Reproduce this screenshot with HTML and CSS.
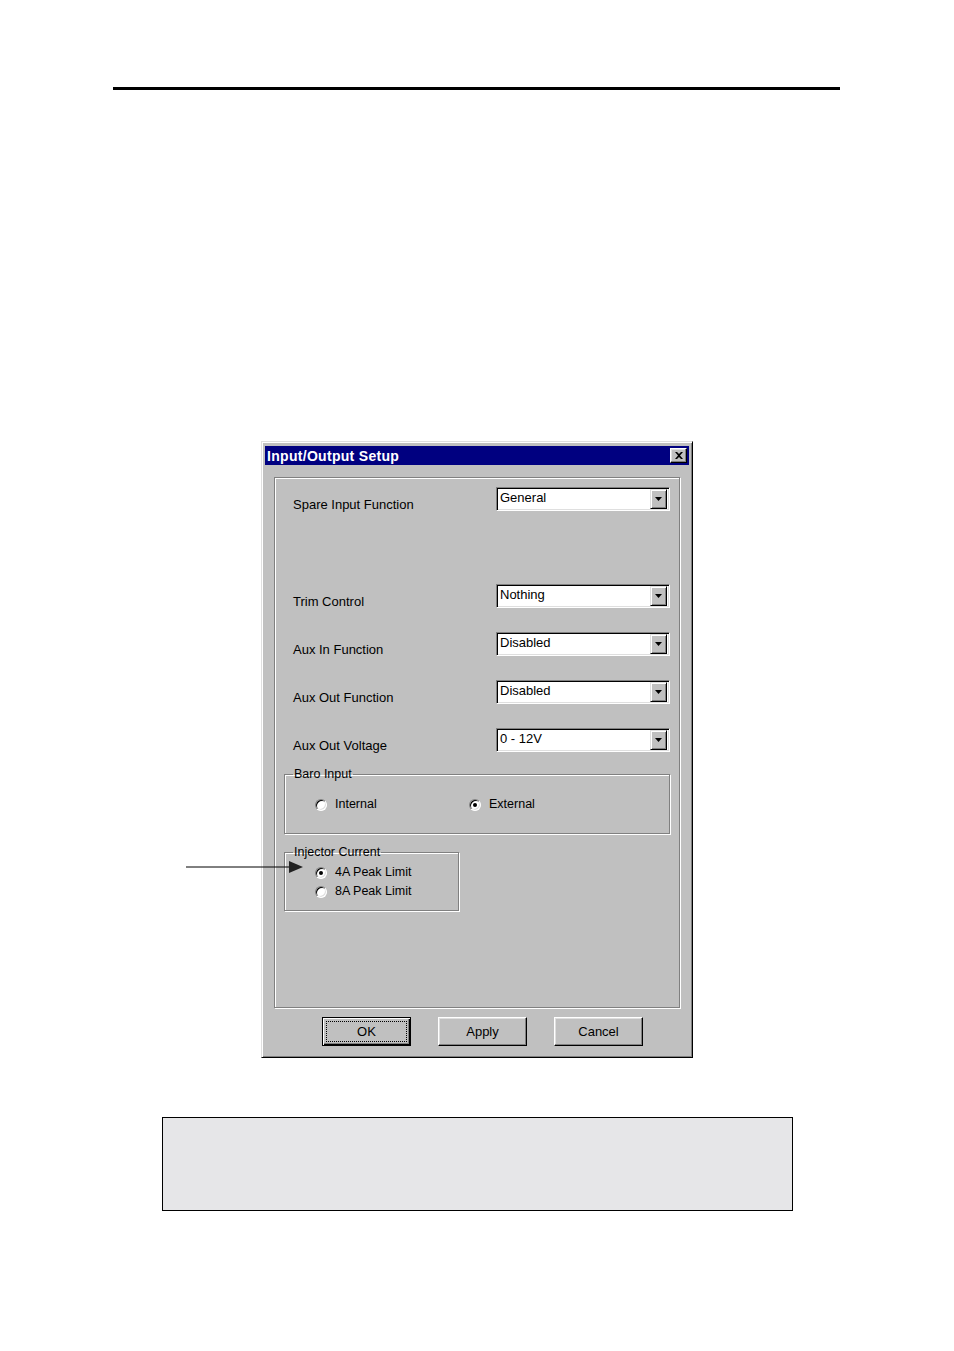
FILE: index.html
```html
<!DOCTYPE html>
<html>
<head>
<meta charset="utf-8">
<title>Input/Output Setup</title>
<link rel="stylesheet" href="styles.css">
</head>
<body>
<div class="page">
  <div class="rule"></div>

  <div class="dialog">
    <div class="titlebar">
      <span class="title">Input/Output Setup</span>
      <span class="close"><svg width="8" height="7" viewBox="0 0 8 7"><path d="M0 0h2l2 2 2-2h2L5 3.5 8 7H6L4 5 2 7H0l3-3.5z" fill="#000"/></svg></span>
    </div>

    <div class="panel">
      <div class="row first">
        <span class="label">Spare Input Function</span>
        <div class="combo"><span class="combo-text">General</span><span class="combo-btn"><svg width="7" height="4" viewBox="0 0 7 4"><path d="M0 0h7L3.5 4z" fill="#000"/></svg></span></div>
      </div>
      <div class="row wide">
        <span class="label">Trim Control</span>
        <div class="combo"><span class="combo-text">Nothing</span><span class="combo-btn"><svg width="7" height="4" viewBox="0 0 7 4"><path d="M0 0h7L3.5 4z" fill="#000"/></svg></span></div>
      </div>
      <div class="row">
        <span class="label">Aux In Function</span>
        <div class="combo"><span class="combo-text">Disabled</span><span class="combo-btn"><svg width="7" height="4" viewBox="0 0 7 4"><path d="M0 0h7L3.5 4z" fill="#000"/></svg></span></div>
      </div>
      <div class="row">
        <span class="label">Aux Out Function</span>
        <div class="combo"><span class="combo-text">Disabled</span><span class="combo-btn"><svg width="7" height="4" viewBox="0 0 7 4"><path d="M0 0h7L3.5 4z" fill="#000"/></svg></span></div>
      </div>
      <div class="row">
        <span class="label">Aux Out Voltage</span>
        <div class="combo"><span class="combo-text">0 - 12V</span><span class="combo-btn"><svg width="7" height="4" viewBox="0 0 7 4"><path d="M0 0h7L3.5 4z" fill="#000"/></svg></span></div>
      </div>

      <fieldset class="group baro">
        <legend>Baro Input</legend>
        <div class="radio-row">
          <span class="opt opt-wide"><span class="radio"></span>Internal</span>
          <span class="opt"><span class="radio on"></span>External</span>
        </div>
      </fieldset>

      <fieldset class="group injector">
        <legend>Injector Current</legend>
        <div class="radio-col">
          <span class="opt"><span class="radio on"></span>4A Peak Limit</span>
          <span class="opt"><span class="radio"></span>8A Peak Limit</span>
        </div>
      </fieldset>
    </div>

    <div class="buttons">
      <div class="btn default"><span class="focus">OK</span></div>
      <div class="btn">Apply</div>
      <div class="btn">Cancel</div>
    </div>
  </div>

  <div class="note"></div>

  <svg class="pointer" width="118" height="14" viewBox="0 0 118 14"><line x1="0" y1="7" x2="104" y2="7" stroke="#000" stroke-width="1"/><path d="M103 1L117 7 103 13z" fill="#222"/></svg>
</div>
</body>
</html>
```

FILE: styles.css
```css
html, body {
  margin: 0;
  padding: 0;
  background: #fff;
}

.page {
  position: relative;
  width: 954px;
  height: 1351px;
  overflow: hidden;
  font-family: "Liberation Sans", Arial, sans-serif;
  color: #000;
}

.rule {
  margin: 87px 0 0 113px;
  width: 727px;
  height: 3px;
  background: #000;
}

.dialog {
  margin: 351px 0 0 261px;
  width: 432px;
  box-sizing: border-box;
  background: #c0c0c0;
  border: 1px solid;
  border-color: #dfdfdf #000 #000 #dfdfdf;
  box-shadow: inset 1px 1px 0 #fff, inset -1px -1px 0 #808080;
  padding: 3px 3px 11px 3px;
}

.titlebar {
  height: 19px;
  margin-top: 1px;
  background: #000080;
  display: flex;
  align-items: center;
  justify-content: space-between;
  padding: 0 2px 0 2px;
}

.title {
  color: #fff;
  font-weight: bold;
  font-size: 14px;
  letter-spacing: 0.3px;
}

.close {
  width: 17px;
  height: 15px;
  box-sizing: border-box;
  background: #c0c0c0;
  border: 1px solid;
  border-color: #fff #000 #000 #fff;
  box-shadow: inset -1px -1px 0 #808080, inset 1px 1px 0 #dfdfdf;
  display: flex;
  align-items: center;
  justify-content: center;
}

.panel {
  margin: 12px 9px 0 9px;
  height: 531px;
  box-sizing: border-box;
  border: 1px solid #808080;
  box-shadow: inset 1px 1px 0 #fff, 1px 1px 0 #fff;
  padding-top: 9px;
  display: flex;
  flex-direction: column;
}

.row {
  display: flex;
  align-items: flex-end;
  padding: 0 8px 0 18px;
  margin-top: 24px;
}

.row.first {
  margin-top: 0;
}

.row.wide {
  margin-top: 73px;
}

.label {
  width: 203px;
  font-size: 13px;
  line-height: 15px;
  margin-bottom: -1px;
}

.combo {
  width: 174px;
  height: 24px;
  box-sizing: border-box;
  background: #fff;
  border: 1px solid;
  border-color: #808080 #fff #fff #808080;
  box-shadow: inset 1px 1px 0 #000, inset -1px -1px 0 #dfdfdf;
  padding: 2px 2px 2px 3px;
  display: flex;
  align-items: center;
  justify-content: space-between;
}

.combo-text {
  font-size: 13px;
  line-height: 16px;
  margin-top: -2px;
}

.combo-btn {
  width: 17px;
  height: 20px;
  box-sizing: border-box;
  background: #c0c0c0;
  border: 1px solid;
  border-color: #dfdfdf #000 #000 #dfdfdf;
  box-shadow: inset 1px 1px 0 #fff, inset -1px -1px 0 #808080;
  display: flex;
  align-items: center;
  justify-content: center;
}

.group {
  margin: 0 9px;
  padding: 0 6px 0 8px;
  min-inline-size: 0;
  border: 1px solid #808080;
  box-shadow: inset 1px 1px 0 #fff, 1px 1px 0 #fff;
}

.group legend {
  font-size: 12.5px;
  line-height: 15px;
  padding: 0 1px;
}

.baro {
  margin-top: 15px;
  padding-top: 13px;
  padding-bottom: 19px;
}

.injector {
  width: 175px;
  box-sizing: border-box;
  margin-top: 11px;
  padding-top: 3px;
  padding-bottom: 9px;
}

.radio-row {
  display: flex;
  padding-left: 22px;
}

.radio-col {
  display: flex;
  flex-direction: column;
  padding-left: 22px;
}

.opt {
  display: flex;
  align-items: center;
  font-size: 12.5px;
  line-height: 19px;
}

.opt-wide {
  width: 154px;
}

.radio {
  width: 12px;
  height: 12px;
  box-sizing: border-box;
  border-radius: 50%;
  background: #fff;
  border: 1px solid;
  border-color: #808080 #fff #fff #808080;
  box-shadow: inset 1px 1px 0 #000, inset -1px -1px 0 #dfdfdf;
  margin-right: 8px;
  position: relative;
  flex: none;
}

.radio.on::after {
  content: "";
  position: absolute;
  left: 3px;
  top: 3px;
  width: 4px;
  height: 4px;
  border-radius: 50%;
  background: #000;
}

.buttons {
  display: flex;
  gap: 27px;
  margin: 9px 0 0 57px;
}

.btn {
  width: 89px;
  height: 29px;
  box-sizing: border-box;
  background: #c0c0c0;
  border: 1px solid;
  border-color: #fff #000 #000 #fff;
  box-shadow: inset -1px -1px 0 #808080, inset 1px 1px 0 #dfdfdf;
  display: flex;
  align-items: center;
  justify-content: center;
  font-size: 13px;
}

.btn.default {
  border: 1px solid #000;
  box-shadow: inset 1px 1px 0 #fff, inset -1px -1px 0 #000, inset -2px -2px 0 #808080;
  padding: 3px;
}

.focus {
  flex: 1;
  align-self: stretch;
  border: 1px dotted #000;
  display: flex;
  align-items: center;
  justify-content: center;
}

.note {
  margin: 59px 0 0 162px;
  width: 631px;
  height: 94px;
  box-sizing: border-box;
  background: #e6e6e8;
  border: 1px solid #000;
}

.pointer {
  position: absolute;
  left: 186px;
  top: 860px;
}
```
